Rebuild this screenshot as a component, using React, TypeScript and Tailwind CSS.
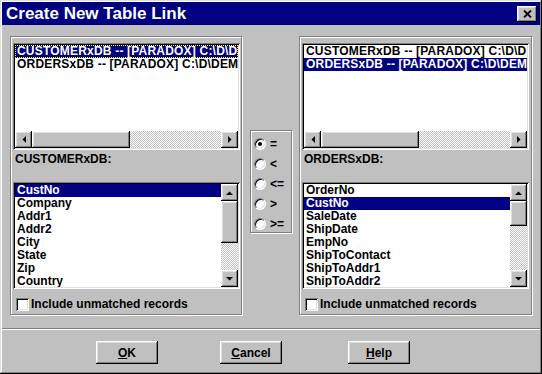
import React from "react";

const raised =
  "shadow-[inset_-1px_-1px_0_#000,inset_1px_1px_0_#fff,inset_-2px_-2px_0_#808080,inset_2px_2px_0_#dfdfdf]";
const sunken =
  "shadow-[inset_1px_1px_0_#808080,inset_-1px_-1px_0_#fff,inset_2px_2px_0_#000,inset_-2px_-2px_0_#dfdfdf]";
const etched = "border border-[#808080] shadow-[inset_1px_1px_0_#fff,1px_1px_0_#fff]";
const track =
  "bg-[image:repeating-conic-gradient(#c0c0c0_0%_25%,#ffffff_0%_50%)] bg-[length:2px_2px]";

function Arrow({ dir }: { dir: "up" | "down" | "left" | "right" }) {
  const pts: Record<string, string> = {
    up: "0,4 7,4 3.5,0.5",
    down: "0,0 7,0 3.5,3.5",
    left: "4,0 4,7 0.5,3.5",
    right: "0,0 0,7 3.5,3.5",
  };
  const vert = dir === "up" || dir === "down";
  return (
    <svg width={vert ? 7 : 4} height={vert ? 4 : 7} viewBox={vert ? "0 0 7 4" : "0 0 4 7"}>
      <polygon points={pts[dir]} fill="#000" />
    </svg>
  );
}

function ScrollBtn({ dir }: { dir: "up" | "down" | "left" | "right" }) {
  return (
    <div className={`w-[17px] h-[17px] shrink-0 bg-[#c0c0c0] flex items-center justify-center ${raised}`}>
      <Arrow dir={dir} />
    </div>
  );
}

function HScroll() {
  return (
    <div className="h-[17px] flex shrink-0">
      <ScrollBtn dir="left" />
      <div className={`w-[98px] h-[17px] bg-[#c0c0c0] ${raised}`} />
      <div className={`flex-1 ${track}`} />
      <ScrollBtn dir="right" />
    </div>
  );
}

function VScroll({ thumb }: { thumb: string }) {
  return (
    <div className="w-[17px] flex flex-col shrink-0">
      <ScrollBtn dir="up" />
      <div className={`${thumb} w-[17px] bg-[#c0c0c0] ${raised}`} />
      <div className={`flex-1 ${track}`} />
      <ScrollBtn dir="down" />
    </div>
  );
}

function Row({
  text,
  selected,
  focus,
  wide,
}: {
  text: string;
  selected?: boolean;
  focus?: boolean;
  wide?: boolean;
}) {
  return (
    <div
      className={`h-[13px] leading-[13px] pl-[2px] whitespace-nowrap overflow-hidden ${
        wide ? "tracking-[0.2px]" : ""
      } ${selected ? "bg-[#000080] text-white" : "text-black"} ${
        focus ? "outline-1 outline-dotted outline-[#ffff00] -outline-offset-1" : ""
      }`}
    >
      {text}
    </div>
  );
}

function TableList({ sel }: { sel: number }) {
  const items = ["CUSTOMERxDB -- [PARADOX] C:\\D\\D", "ORDERSxDB -- [PARADOX] C:\\D\\DEM"];
  return (
    <div className={`w-[227px] h-[107px] bg-white p-[2px] flex flex-col ${sunken}`}>
      <div className="flex-1 overflow-hidden">
        {items.map((t, i) => (
          <Row key={t} text={t} wide selected={i === sel} focus={sel === 0 && i === 0} />
        ))}
      </div>
      <HScroll />
    </div>
  );
}

function FieldList({ items, sel, thumb }: { items: string[]; sel: number; thumb: string }) {
  return (
    <div className={`w-[227px] h-[107px] bg-white p-[2px] flex ${sunken}`}>
      <div className="flex-1 overflow-hidden">
        {items.map((t, i) => (
          <Row key={t} text={t} selected={i === sel} />
        ))}
      </div>
      <VScroll thumb={thumb} />
    </div>
  );
}

function Check() {
  return (
    <div className="flex items-center ml-[3px] mt-[9px] h-[13px]">
      <div className={`w-[13px] h-[13px] bg-white ${sunken}`} />
      <span className="ml-[2px] leading-[13px]">Include unmatched records</span>
    </div>
  );
}

function Group({
  label,
  tableSel,
  fields,
  fieldSel,
  thumb,
  width,
}: {
  label: string;
  tableSel: number;
  fields: string[];
  fieldSel: number;
  thumb: string;
  width: string;
}) {
  return (
    <div className={`${width} h-[279px] ${etched} pl-[2px] pt-[6px] flex flex-col`}>
      <TableList sel={tableSel} />
      <div className="mt-[3px] h-[13px] leading-[13px] pl-[2px]">{label}</div>
      <div className="mt-[16px]">
        <FieldList items={fields} sel={fieldSel} thumb={thumb} />
      </div>
      <Check />
    </div>
  );
}

function Radio({ label, checked }: { label: string; checked?: boolean }) {
  return (
    <div className="h-[20px] flex items-center">
      <div className="relative w-[12px] h-[12px] rounded-full bg-white border border-t-[#808080] border-l-[#808080] border-r-white border-b-white shadow-[inset_1px_1px_0_#000,inset_-1px_-1px_0_#dfdfdf]">
        {checked && (
          <div className="absolute left-[3px] top-[3px] w-[4px] h-[4px] rounded-full bg-black" />
        )}
      </div>
      <span className="ml-[4px] leading-[13px]">{label}</span>
    </div>
  );
}

function Btn({ children, cls }: { children: React.ReactNode; cls: string }) {
  return (
    <div
      className={`${cls} w-[62px] h-[23px] bg-[#c0c0c0] flex items-center justify-center ${raised}`}
    >
      {children}
    </div>
  );
}

export default function App() {
  return (
    <div className="w-[542px] h-[374px] bg-[#c0c0c0] p-[2px] font-['Liberation_Sans',Arial,sans-serif] text-[12px] font-bold text-black shadow-[inset_-1px_-1px_0_#000,inset_1px_1px_0_#dfdfdf,inset_-2px_-2px_0_#808080,inset_2px_2px_0_#fff] flex flex-col">
      <div className="h-[23px] bg-[#000080] flex items-center justify-between pl-[4px] pr-[3px]">
        <span className="text-white text-[17px] font-bold leading-[20px]">Create New Table Link</span>
        <div className={`w-[20px] h-[16px] bg-[#c0c0c0] flex items-center justify-center ${raised}`}>
          <svg width="9" height="8" viewBox="0 0 9 8">
            <path d="M1 0.5 L8 7.5 M8 0.5 L1 7.5" stroke="#000" strokeWidth="1.8" />
          </svg>
        </div>
      </div>

      <div className="flex items-start pl-[8px] mt-[11px]">
        <Group
          width="w-[232px]"
          label="CUSTOMERxDB:"
          tableSel={0}
          fields={["CustNo", "Company", "Addr1", "Addr2", "City", "State", "Zip", "Country"]}
          fieldSel={0}
          thumb="h-[42px]"
        />
        <div className={`ml-[8px] mt-[94px] w-[42px] h-[103px] ${etched} pl-[3px] pt-[3px]`}>
          <Radio label="=" checked />
          <Radio label="<" />
          <Radio label="<=" />
          <Radio label=">" />
          <Radio label=">=" />
        </div>
        <Group
          width="w-[233px] ml-[7px]"
          label="ORDERSxDB:"
          tableSel={1}
          fields={[
            "OrderNo",
            "CustNo",
            "SaleDate",
            "ShipDate",
            "EmpNo",
            "ShipToContact",
            "ShipToAddr1",
            "ShipToAddr2",
          ]}
          fieldSel={1}
          thumb="h-[25px]"
        />
      </div>

      <div className="mt-[13px] h-[2px] border-t border-t-[#808080] border-b border-b-white" />

      <div className="flex mt-[11px]">
        <Btn cls="ml-[94px]">
          <span>
            <span className="underline">O</span>K
          </span>
        </Btn>
        <Btn cls="ml-[62px]">
          <span>
            <span className="underline">C</span>ancel
          </span>
        </Btn>
        <Btn cls="ml-[66px]">
          <span>
            <span className="underline">H</span>elp
          </span>
        </Btn>
      </div>
    </div>
  );
}
